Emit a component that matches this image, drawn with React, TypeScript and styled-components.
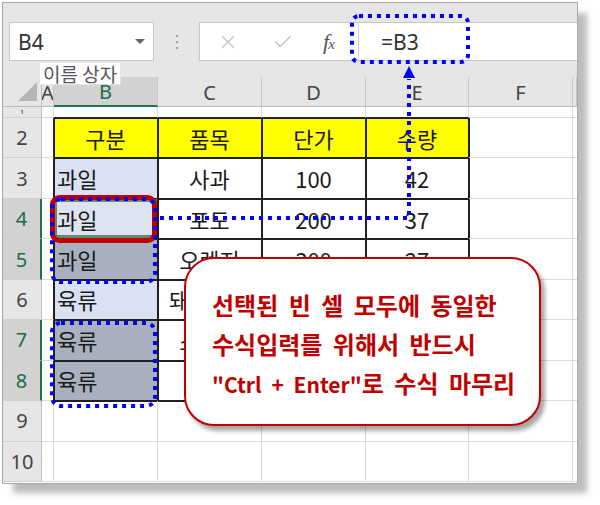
import React from 'react';
import styled, { createGlobalStyle } from 'styled-components';
import { X, Check } from 'lucide-react';

const GlobalStyle = createGlobalStyle`
  html, body { margin: 0; padding: 0; background: #ffffff; }
  body { font-family: "Noto Sans", "Noto Sans CJK KR", sans-serif; }
`;

const Page = styled.div`
  position: relative;
  width: 600px;
  height: 505px;
  padding: 3px 0 0 3px;
  box-sizing: border-box;
  overflow: hidden;
`;

const Frame = styled.div`
  width: 574px;
  height: 480px;
  background: #ffffff;
  box-shadow: 0 0 0 1px #a8a8a8, 10px 10px 6px #bcbcbc;
  display: flex;
  flex-direction: column;
  overflow: hidden;
`;

const Toolbar = styled.div`
  height: 74px;
  flex: none;
  box-sizing: border-box;
  background: #e6e6e6;
  display: flex;
  align-items: flex-start;
  padding: 19px 0 0 6px;
`;

const NameBox = styled.div`
  width: 145px;
  height: 39px;
  box-sizing: border-box;
  background: #ffffff;
  border: 1px solid #c6c6c6;
  display: flex;
  align-items: center;
  justify-content: space-between;
  padding: 0 8px 0 8px;
  font: 21px "Noto Sans", sans-serif;
  color: #333333;
`;

const DropArrow = styled.span`
  width: 0;
  height: 0;
  border-left: 5px solid transparent;
  border-right: 5px solid transparent;
  border-top: 5px solid #666666;
`;

const DotsSep = styled.div`
  width: 45px;
  height: 39px;
  display: flex;
  flex-direction: column;
  align-items: center;
  justify-content: center;
  gap: 4px;
`;

const Dot = styled.span`
  width: 2px;
  height: 2px;
  background: #a0a0a0;
`;

const FormulaBox = styled.div`
  flex: 1;
  height: 39px;
  box-sizing: border-box;
  background: #ffffff;
  border: 1px solid #c6c6c6;
  border-right: none;
  display: flex;
`;

const FormulaButtons = styled.div`
  width: 158px;
  flex: none;
  display: flex;
  align-items: center;
  padding-left: 17px;
  box-sizing: border-box;
  gap: 33px;
  color: #c4c4c4;
`;

const Fx = styled.span`
  font: italic 22px "Liberation Serif", serif;
  color: #555555;
  margin-left: -4px;
  letter-spacing: -1px;
  & sub {
    font-size: 15px;
    vertical-align: 0;
  }
`;

const FormulaInput = styled.div`
  flex: 1;
  border-left: 1px solid #d8d8d8;
  display: flex;
  align-items: center;
  padding-left: 22px;
  font: 21px "Noto Sans", sans-serif;
  color: #333333;
`;

const Sheet = styled.div`
  display: grid;
  grid-template-columns: 39px 12px 104px 104px 104px 103px 104px 4px;
  grid-template-rows: 30px 11px repeat(9, 40.45px);
  flex: none;
`;

const Corner = styled.div`
  position: relative;
  background: #e6e6e6;
  border-right: 1px solid #bdbdbd;
  border-bottom: 1px solid #bdbdbd;
  box-sizing: border-box;
  &::after {
    content: '';
    position: absolute;
    right: 4px;
    bottom: 5px;
    width: 0;
    height: 0;
    border-left: 19px solid transparent;
    border-bottom: 19px solid #b6b6b6;
  }
`;

const ColHead = styled.div<{ $sel?: boolean }>`
  box-sizing: border-box;
  background: ${p => (p.$sel ? '#d2d2d2' : '#e6e6e6')};
  border-right: 1px solid #c8c8c8;
  border-bottom: ${p => (p.$sel ? '2px solid #217346' : '1px solid #bdbdbd')};
  display: flex;
  align-items: center;
  justify-content: center;
  overflow: hidden;
  font: 20px "Noto Sans", sans-serif;
  color: ${p => (p.$sel ? '#1f6b43' : '#444444')};
  padding-top: 1px;
`;

const RowHead = styled.div<{ $sel?: boolean; $tiny?: boolean }>`
  box-sizing: border-box;
  background: ${p => (p.$sel ? '#d2d2d2' : '#e6e6e6')};
  border-right: ${p => (p.$sel ? '2px solid #217346' : '1px solid #bdbdbd')};
  border-bottom: 1px solid #d0d0d0;
  display: flex;
  align-items: center;
  justify-content: center;
  overflow: hidden;
  font: ${p => (p.$tiny ? '5px' : '20px')} "Noto Sans", sans-serif;
  font-weight: ${p => (p.$tiny ? 700 : 400)};
  color: ${p => (p.$sel ? '#1f6b43' : '#444444')};
`;

type CellProps = {
  $bg?: string;
  $align?: 'left' | 'center';
  $darkR?: boolean;
  $darkB?: boolean;
  $shadow?: string;
};

const Cell = styled.div<CellProps>`
  box-sizing: border-box;
  background: ${p => p.$bg ?? '#ffffff'};
  border-right: 1px solid ${p => (p.$darkR ? '#1f1f1f' : '#dadada')};
  border-bottom: 1px solid ${p => (p.$darkB ? '#1f1f1f' : '#dadada')};
  box-shadow: ${p => p.$shadow ?? 'none'};
  display: flex;
  align-items: center;
  justify-content: ${p => (p.$align === 'left' ? 'flex-start' : 'center')};
  padding: 0 3px;
  overflow: hidden;
  white-space: nowrap;
  font: 22px "Noto Sans CJK KR", "Noto Sans", sans-serif;
  color: #1a1a1a;
`;

const Overlay = styled.svg`
  position: absolute;
  left: 0;
  top: 0;
  pointer-events: none;
`;

const Tooltip = styled.div`
  position: absolute;
  left: 40px;
  top: 63px;
  height: 21px;
  padding: 0 3px;
  background: #ffffff;
  box-shadow: 0 0 0 1px #e4e4e4;
  display: flex;
  align-items: center;
  font: 19px "Noto Sans CJK KR", sans-serif;
  color: #555555;
  white-space: nowrap;
`;

const Callout = styled.div`
  position: absolute;
  left: 184px;
  top: 257px;
  width: 357px;
  height: 169px;
  box-sizing: border-box;
  border: 2px solid #c00000;
  border-radius: 30px;
  background: #ffffff;
  box-shadow: 4px 5px 4px rgba(0, 0, 0, 0.35);
  padding: 26px 0 0 26px;
`;

const CalloutLine = styled.div`
  font: 700 24px "Noto Sans CJK KR", sans-serif;
  line-height: 39px;
  color: #c00000;
  word-spacing: 5px;
  white-space: nowrap;
`;

const Latin = styled.span`
  font-size: 21px;
`;

const colLetters = ['A', 'B', 'C', 'D', 'E', 'F', ''];

const data: Record<number, string[]> = {
  1: ['', '', '', '', '', '', ''],
  2: ['', '구분', '품목', '단가', '수량', '', ''],
  3: ['', '과일', '사과', '100', '42', '', ''],
  4: ['', '과일', '포도', '200', '37', '', ''],
  5: ['', '과일', '오렌지', '300', '27', '', ''],
  6: ['', '육류', '돼지고기', '', '', '', ''],
  7: ['', '육류', '소고기', '', '', '', ''],
  8: ['', '육류', '', '', '', '', ''],
  9: ['', '', '', '', '', '', ''],
  10: ['', '', '', '', '', '', ''],
};

const selRows = [4, 5, 7, 8];
const DARK = '#1f1f1f';

function cellBg(r: number, c: number): string | undefined {
  if (r === 2 && c >= 1 && c <= 4) return '#ffff00';
  if (c === 1) {
    if (r === 3 || r === 6) return '#d9e1f2';
    if (r === 4) return '#dde3f0';
    if (r === 5 || r === 7 || r === 8) return '#a9b0bf';
  }
  return undefined;
}

function cellProps(r: number, c: number): CellProps {
  const inTable = r >= 2 && r <= 8 && c >= 1 && c <= 4;
  const darkR = inTable || (c === 0 && r >= 2 && r <= 8);
  const darkB = inTable || (r === 1 && c >= 1 && c <= 4);
  const shadows: string[] = [];
  if (inTable || (c === 5 && r >= 2 && r <= 8)) shadows.push(`inset 1px 0 0 ${DARK}`);
  if (inTable || (r === 9 && c >= 1 && c <= 4)) shadows.push(`inset 0 1px 0 ${DARK}`);
  if (r === 4 && c === 1) shadows.unshift('inset 0 0 0 3px #5d8a70');
  return {
    $bg: cellBg(r, c),
    $align: c === 1 && r !== 2 ? 'left' : 'center',
    $darkR: darkR,
    $darkB: darkB,
    $shadow: shadows.length ? shadows.join(', ') : undefined,
  };
}

const BLUE = '#0000ff';

export default function App() {
  const rows = Array.from({ length: 10 }, (_, i) => i + 1);
  return (
    <Page>
      <GlobalStyle />
      <Frame>
        <Toolbar>
          <NameBox>
            <span>B4</span>
            <DropArrow />
          </NameBox>
          <DotsSep>
            <Dot />
            <Dot />
            <Dot />
          </DotsSep>
          <FormulaBox>
            <FormulaButtons>
              <X size={22} strokeWidth={1.4} />
              <Check size={22} strokeWidth={1.6} />
              <Fx>
                f<sub>x</sub>
              </Fx>
            </FormulaButtons>
            <FormulaInput>=B3</FormulaInput>
          </FormulaBox>
        </Toolbar>
        <Sheet>
          <Corner />
          {colLetters.map((l, i) => (
            <ColHead key={`h${i}`} $sel={l === 'B'}>
              {l}
            </ColHead>
          ))}
          {rows.map(r => (
            <React.Fragment key={r}>
              <RowHead $sel={selRows.includes(r)} $tiny={r === 1}>
                {r}
              </RowHead>
              {data[r].map((v, c) => (
                <Cell key={c} {...cellProps(r, c)}>
                  {v}
                </Cell>
              ))}
            </React.Fragment>
          ))}
        </Sheet>
      </Frame>

      <Tooltip>이름 상자</Tooltip>

      <Overlay width={600} height={505} viewBox="0 0 600 505">
        <rect x={52.5} y={197.5} width={102} height={43} rx={7} fill="none" stroke="#c00000" strokeWidth={5} />
        <g fill="none" stroke={BLUE} strokeWidth={4} strokeDasharray="4 5">
          <rect x={52} y={199} width={103} height={83} rx={9} />
          <rect x={52} y={323} width={103} height={83} rx={9} />
          <rect x={352} y={16} width={116} height={46} rx={7} />
          <polyline points="160,218 409,218 409,79" />
        </g>
        <polygon points="409,66 403,78 415,78" fill={BLUE} />
      </Overlay>

      <Callout>
        <CalloutLine>선택된 빈 셀 모두에 동일한</CalloutLine>
        <CalloutLine>수식입력를 위해서 반드시</CalloutLine>
        <CalloutLine>
          <Latin>"Ctrl + Enter"</Latin>로 수식 마무리
        </CalloutLine>
      </Callout>
    </Page>
  );
}
